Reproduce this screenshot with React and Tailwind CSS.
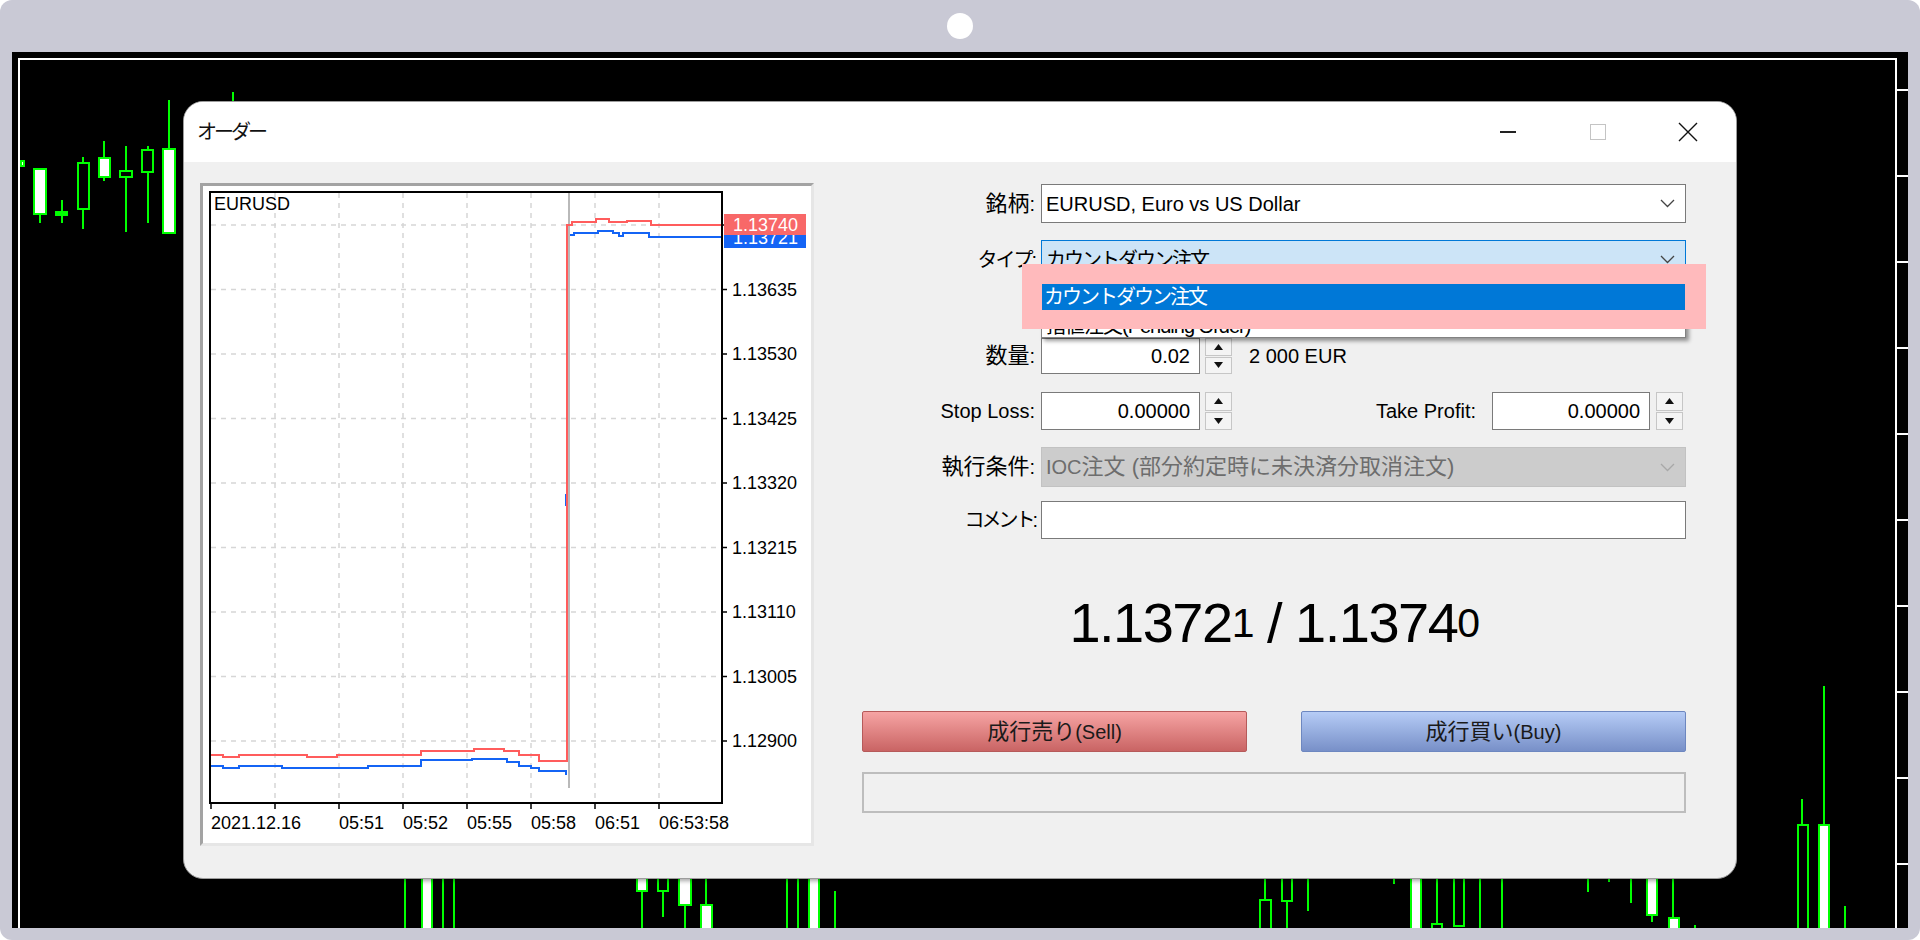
import React from "react";

const G = "#00ff00";

// background candles, page coordinates
const bodies = [
  [20, 25, 160, 167, "#fff"],
  [33, 47, 168, 215, "#fff"],
  [55, 68, 211, 216, G],
  [77, 90, 162, 210, "#000"],
  [98, 111, 157, 178, "#fff"],
  [119, 133, 170, 178, "#000"],
  [141, 154, 149, 173, "#000"],
  [162, 176, 148, 234, "#fff"],
  [421, 433, 860, 940, "#fff"],
  [636, 648, 860, 892, "#fff"],
  [657, 669, 860, 892, "#000"],
  [678, 692, 860, 906, "#fff"],
  [700, 713, 904, 940, "#fff"],
  [808, 820, 860, 940, "#fff"],
  [1259, 1272, 899, 940, "#000"],
  [1281, 1293, 860, 902, "#000"],
  [1410, 1422, 860, 940, "#fff"],
  [1431, 1443, 923, 940, "#000"],
  [1453, 1465, 860, 927, "#000"],
  [1646, 1658, 860, 916, "#fff"],
  [1668, 1680, 917, 940, "#fff"],
  [1797, 1809, 824, 940, "#000"],
  [1818, 1830, 824, 940, "#fff"],
];
const wicks = [
  [40, 215, 223], [62, 200, 223], [83, 157, 229], [104, 141, 181], [126, 146, 232], [148, 146, 223], [169, 100, 148], [233, 92, 110],
  [405, 860, 940], [443, 860, 940], [454, 860, 940], [642, 892, 940], [663, 892, 917], [685, 906, 940], [706, 860, 905], [787, 860, 940], [798, 860, 940], [835, 891, 940],
  [1265, 860, 900], [1287, 902, 940], [1308, 860, 911], [1394, 860, 884], [1437, 860, 923], [1480, 860, 940], [1502, 860, 940],
  [1588, 860, 892], [1609, 860, 882], [1631, 860, 903], [1652, 916, 922], [1673, 860, 918], [1695, 925, 940],
  [1802, 799, 824], [1824, 686, 824], [1845, 906, 940],
];
const ticks = [89, 175, 261, 347, 433, 519, 605, 691, 777, 863];

const Background = () => (
  <svg className="absolute inset-0" width="1896" height="876" viewBox="12 52 1896 876">
    {wicks.map(([x, a, b], i) => (
      <line key={"w" + i} x1={x} x2={x} y1={a} y2={b} stroke={G} strokeWidth="2" />
    ))}
    {bodies.map(([x1, x2, y1, y2, f], i) => (
      <rect key={"b" + i} x={x1 + 1} y={y1 + 1} width={x2 - x1 - 2} height={y2 - y1 - 2} fill={f} stroke={G} strokeWidth="2" />
    ))}
    <rect x="18" y="58" width="1879" height="2" fill="#fff" />
    <rect x="18" y="58" width="2" height="880" fill="#fff" />
    <rect x="1895" y="58" width="2" height="880" fill="#fff" />
    {ticks.map((y) => (
      <rect key={y} x="1897" y={y} width="11" height="2" fill="#fff" />
    ))}
  </svg>
);

const hGrid = [225, 289.5, 354, 418.5, 483, 547.5, 612, 676.5, 741];
const prices = ["1.13740", "1.13635", "1.13530", "1.13425", "1.13320", "1.13215", "1.13110", "1.13005", "1.12900"];
const vGrid = [275, 339, 403, 467, 531, 595, 659];
const times = [[211, "2021.12.16"], [339, "05:51"], [403, "05:52"], [467, "05:55"], [531, "05:58"], [595, "06:51"], [659, "06:53:58"]];

const Chart = () => (
  <div className="h-[663px] w-[614px] shrink-0 border-[3px] border-t-[#a3a3a3] border-l-[#a3a3a3] border-r-[#e6e6e6] border-b-[#e6e6e6] bg-white">
    <svg width="608" height="657" viewBox="203 186 608 657" className="font-['Liberation_Sans',sans-serif]">
      {hGrid.map((y) => (
        <line key={y} x1="211" x2="721" y1={y} y2={y} stroke="#d6d6d6" strokeWidth="1.5" strokeDasharray="5 5" />
      ))}
      {vGrid.map((x) => (
        <line key={x} x1={x} x2={x} y1="193" y2="802" stroke="#d6d6d6" strokeWidth="1.5" strokeDasharray="5 5" />
      ))}
      <line x1="569" x2="569" y1="193" y2="788" stroke="#8a8a8a" strokeWidth="1.2" />
      <rect x="210" y="192" width="512" height="611" fill="none" stroke="#000" strokeWidth="2" />
      {hGrid.map((y) => (
        <line key={"t" + y} x1="722" x2="727" y1={y} y2={y} stroke="#000" strokeWidth="1.5" />
      ))}
      {[211, ...vGrid].map((x) => (
        <line key={"v" + x} x1={x} x2={x} y1="803" y2="809" stroke="#000" strokeWidth="1.5" />
      ))}
      {prices.slice(1).map((p, i) => (
        <text key={p} x="732" y={hGrid[i + 1] + 6} fontSize="18" fill="#000">{p}</text>
      ))}
      {times.map(([x, t]) => (
        <text key={t} x={x} y="829" fontSize="18" fill="#000">{t}</text>
      ))}
      <text x="214" y="210" fontSize="18" fill="#000">EURUSD</text>

      <path d="M211,766 H223 V768 H239 V766 H282 V768 H368 V766 H421 V760 H472 V759 H507 V762 H519 V766 H531 V768 H539 V771 H566 V775" fill="none" stroke="#1464f5" strokeWidth="2" />
      <path d="M566,494 V506" stroke="#1464f5" strokeWidth="2" />
      <path d="M570,235 H574 V233 H598 V231 H613 V233 H619 V236 H623 V233 H649 V237 H721" fill="none" stroke="#1464f5" strokeWidth="2" />
      <path d="M211,755 H223 V757 H239 V755 H307 V757 H337 V755 H421 V751 H474 V749 H504 V751 H519 V755 H539 V761 H567 V225 H572 V222 H596 V219 H609 V222 H627 V221 H651 V225 H721" fill="none" stroke="#ff5c5c" strokeWidth="2" />

      <rect x="724" y="227" width="82" height="21" fill="#1464f5" />
      <text x="733" y="244" fontSize="18" fill="#fff">1.13721</text>
      <rect x="724" y="214" width="82" height="21" fill="#f86868" />
      <text x="733" y="231" fontSize="18" fill="#fff">1.13740</text>
    </svg>
  </div>
);

const Chevron = ({ c = "#444" }) => (
  <svg width="15" height="9" viewBox="0 0 15 9" className="ml-auto mr-[10px] shrink-0">
    <path d="M1 1 L7.5 7.5 L14 1" fill="none" stroke={c} strokeWidth="1.3" />
  </svg>
);

const Spin = ({ cls }) => (
  <div className={"flex h-full w-[27px] shrink-0 flex-col gap-[1px] " + cls}>
    <div className="flex flex-1 items-center justify-center border border-[#c6c6c6] bg-[#f4f4f4]">
      <svg width="9" height="6"><path d="M0 6 L4.5 0 L9 6Z" fill="#111" /></svg>
    </div>
    <div className="flex flex-1 items-center justify-center border border-[#c6c6c6] bg-[#f4f4f4]">
      <svg width="9" height="6"><path d="M0 0 L4.5 6 L9 0Z" fill="#111" /></svg>
    </div>
  </div>
);

const Label = ({ children, cls = "" }) => (
  <div className={"w-[173px] shrink-0 text-right text-[20px] leading-none text-black " + cls}>{children}</div>
);

export default function App() {
  return (
    <div className="h-[940px] w-full bg-white font-['Liberation_Sans','Noto_Sans_CJK_JP',sans-serif]">
      <div className="flex h-full flex-col rounded-[12px] bg-[#c9c9d5]">
        <div className="flex h-[52px] shrink-0 items-center justify-center">
          <div className="h-[26px] w-[26px] rounded-full bg-white" />
        </div>
        <div className="relative mx-[12px] mb-[12px] flex-1 overflow-hidden bg-black">
          <Background />

          {/* order window */}
          <div className="absolute left-[171px] top-[49px] flex h-[778px] w-[1554px] flex-col overflow-hidden rounded-[20px] border border-[#9c9c9c] bg-[#f0f0f0] shadow-[1px_2px_4px_rgba(0,0,0,0.35)]">
            <div className="flex h-[60px] shrink-0 items-center bg-white pl-[13px]">
              <div className="text-[20px] leading-none tracking-[-3px] text-[#111]">オーダー</div>
              <div className="ml-auto flex h-full pr-[3px]">
                <div className="flex w-[90px] items-center justify-center">
                  <div className="h-[1.5px] w-[16px] bg-[#222]" />
                </div>
                <div className="flex w-[90px] items-center justify-center">
                  <div className="h-[16px] w-[16px] border border-[#c4c4c4]" />
                </div>
                <div className="flex w-[90px] items-center justify-center">
                  <svg width="20" height="20" viewBox="0 0 20 20">
                    <path d="M1 1 L19 19 M19 1 L1 19" stroke="#111" strokeWidth="1.4" />
                  </svg>
                </div>
              </div>
            </div>

            <div className="flex flex-1 pl-[16px] pt-[21px]">
              <Chart />

              <div className="relative ml-[48px] mt-[1px] flex w-[824px] flex-col">
                {/* 銘柄 */}
                <div className="flex h-[39px] items-center">
                  <Label><span className="text-[22px]">銘柄</span>:</Label>
                  <div className="ml-[6px] flex h-full flex-1 items-center border border-[#7a7a7a] bg-white pl-[4px] text-[20px] leading-none">
                    EURUSD, Euro vs US Dollar
                    <Chevron />
                  </div>
                </div>

                {/* タイプ */}
                <div className="mt-[17px] flex h-[39px] items-center">
                  <Label cls="tracking-[-2px]">タイプ:</Label>
                  <div className="ml-[6px] flex h-full flex-1 items-center border border-[#0078d7] bg-[#cce4f7] pl-[4px] text-[20px] leading-none tracking-[-2px]">
                    カウントダウン注文
                    <Chevron />
                  </div>
                </div>

                {/* 数量 */}
                <div className="mt-[59px] flex h-[36px] items-center">
                  <Label><span className="text-[22px]">数量</span>:</Label>
                  <div className="ml-[6px] flex h-full w-[159px] items-center justify-end border border-[#7a7a7a] bg-white pr-[9px] text-[20px] leading-none">0.02</div>
                  <Spin cls="ml-[5px]" />
                  <div className="ml-[17px] text-[20px] leading-none">2 000 EUR</div>
                </div>

                {/* SL / TP */}
                <div className="mt-[18px] flex h-[38px] items-center">
                  <Label>Stop Loss:</Label>
                  <div className="ml-[6px] flex h-full w-[159px] items-center justify-end border border-[#7a7a7a] bg-white pr-[9px] text-[20px] leading-none">0.00000</div>
                  <Spin cls="ml-[5px]" />
                  <div className="flex-1 text-right text-[20px] leading-none">Take Profit:</div>
                  <div className="ml-[16px] flex h-full w-[158px] items-center justify-end border border-[#7a7a7a] bg-white pr-[9px] text-[20px] leading-none">0.00000</div>
                  <Spin cls="ml-[6px] mr-[3px]" />
                </div>

                {/* 執行条件 */}
                <div className="mt-[17px] flex h-[40px] items-center">
                  <Label><span className="text-[22px]">執行条件</span>:</Label>
                  <div className="ml-[6px] flex h-full flex-1 items-center border border-[#c2c2c2] bg-[#cccccc] pl-[4px] text-[22px] leading-none text-[#6d6d6d]">
                    <span className="text-[20px]">IOC</span>注文 (部分約定時に未決済分取消注文)
                    <Chevron c="#a8a8a8" />
                  </div>
                </div>

                {/* コメント */}
                <div className="mt-[14px] flex h-[38px] items-center">
                  <Label cls="tracking-[-3px]">コメント:</Label>
                  <div className="ml-[6px] h-full flex-1 border border-[#7a7a7a] bg-white" />
                </div>

                <div className="mt-[52px] flex h-[64px] items-center justify-center text-[56px] leading-none tracking-[-1.5px] text-black">
                  1.1372<span className="text-[41px]">1</span>
                  <span className="mx-[14px]">/</span>
                  1.1374<span className="text-[41px]">0</span>
                </div>

                <div className="mt-[56px] flex h-[41px] justify-between">
                  <div className="flex w-[385px] items-center justify-center rounded-[2px] border border-[#b65a5a] bg-gradient-to-b from-[#f6a4a4] to-[#c96464] text-[20px] leading-none text-[#1a1a1a]">
                    <span className="text-[22px]">成行売り</span>(Sell)
                  </div>
                  <div className="flex w-[385px] items-center justify-center rounded-[2px] border border-[#6d87c0] bg-gradient-to-b from-[#b6ccf6] to-[#7890c8] text-[20px] leading-none text-[#1a1a1a]">
                    <span className="text-[22px]">成行買い</span>(Buy)
                  </div>
                </div>

                <div className="mt-[20px] h-[41px] border-2 border-[#bdbdbd] bg-[#f0f0f0]" />

                {/* open drop-down list */}
                <div className="absolute left-[179px] top-[95px] h-[59px] w-[645px] border border-[#828282] bg-white shadow-[3px_3px_4px_rgba(0,0,0,0.4)]">
                  <div className="mt-[36px] pl-[4px] text-[20px] leading-none tracking-[-1px]">指値注文(Pending Order)</div>
                </div>
                <div className="absolute left-[160px] top-[80px] h-[65px] w-[684px] bg-[#ffbabc]" />
                <div className="absolute left-[180px] top-[100px] flex h-[26px] w-[643px] items-center bg-[#0078d7] pl-[2px] text-[20px] leading-none tracking-[-2px] text-white">
                  カウントダウン注文
                </div>
              </div>
            </div>
          </div>
        </div>
      </div>
    </div>
  );
}
